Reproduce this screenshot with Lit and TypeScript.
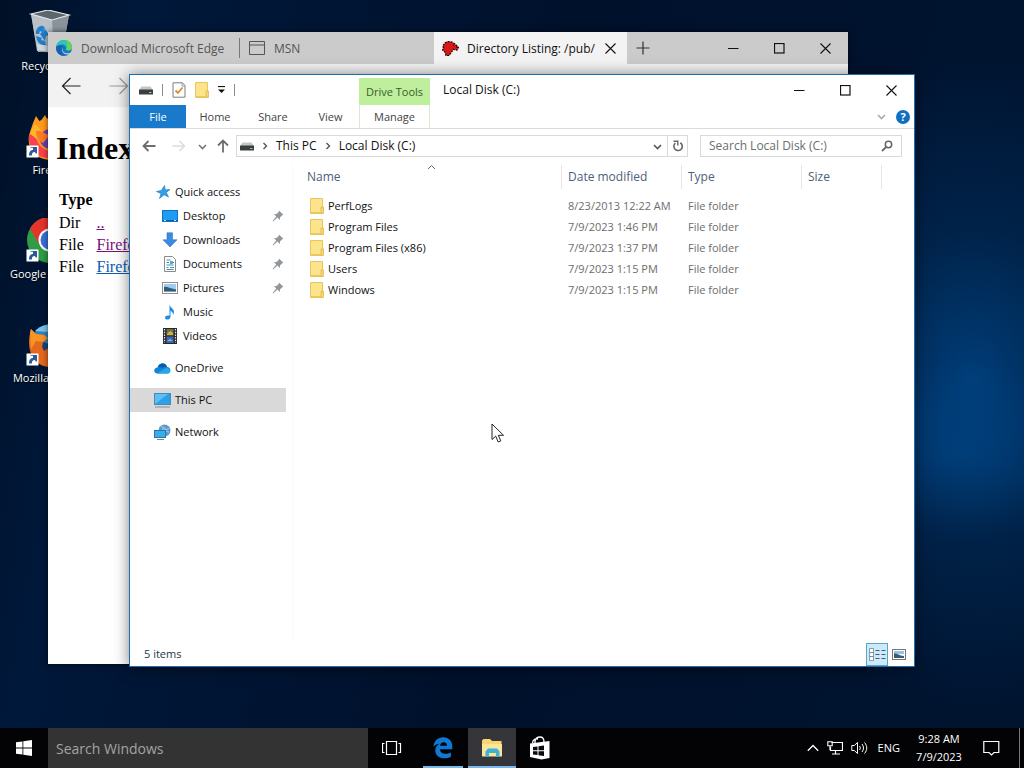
import { LitElement, html, css, svg, nothing } from "lit";
import { customElement } from "lit/decorators.js";

const box = (w: number, h: number, body: unknown) => html`
  <svg width=${w} height=${h} viewBox="0 0 ${w} ${h}" fill="none" aria-hidden="true">${body}</svg>`;

/* ---------- window glyphs ---------- */
const minimize = box(11, 11, svg`<path d="M0 5.5h10.500" stroke="#111"/>`);
const maximize = box(11, 11, svg`<rect x=".5" y=".5" width="9.500" height="9.500" stroke="#111" stroke-width="1.200"/>`);
const close = box(11, 11, svg`<path d="M.5.5l10 10M10.500.5l-10 10" stroke="#111" stroke-width="1.100"/>`);
const plus = box(14, 14, svg`<path d="M7 .5v13M.5 7h13" stroke="#333" stroke-width="1.200"/>`);
const chevronDown = (color: string) => box(9, 9, svg`<path d="M1 3l3.500 3.500L8 3" stroke=${color} stroke-width="1.600"/>`);
const chevronRight = box(6, 8, svg`<path d="M1.500 1l3 3-3 3" stroke="#555" stroke-width="1.400"/>`);

/* ---------- desktop icons ---------- */
const shortcut = svg`
  <rect x=".5" y="31.500" width="12" height="12" fill="#fff"/>
  <path d="M3 41.500c0-4 1.800-5.500 4-5.500v-2.200h-2.500V33H11v6.500h-1l-1.300-1.500C6.500 38 5.800 39.500 6 41.500z" fill="#2c5a9c"/>`;
const recycleBin = box(48, 48, svg`
  <path d="M5 4l18-4 20 5-6 34-25 3z" fill="#a9b1b8"/>
  <path d="M5 4l21 5 2 34-17-2z" fill="#b9c0c6"/>
  <path d="M26 9l17-4-6 33-9 4z" fill="#8b949c"/>
  <path d="M5 4l17-4 21 5-17 5z" fill="#5d656d" stroke="#e3e8ec" stroke-width="1.200"/>
  <path d="M10 24c-1-4 3-9 7-8l2 2-3 4-2-1-1 3zM19 19l4 6-3 1-1 5-5-7zM10 26l6 2-1 2 4 1 1 4c-6 1-9-3-10-9z" fill="#1f7fd0"/>
  <path d="M11 34l16 3v5l-15-2z" fill="#dde2e5" opacity=".7"/>`);
const firefoxNew = box(48, 48, svg`
  <circle cx="24" cy="24" r="20" fill="#ff8a1c"/>
  <path d="M7 9l3-7 4 6 5-7 4 8 10 2 9 13-3 14-14 8C8 45 1 34 3 21z" fill="#ff9a1f"/>
  <path d="M3 21C2 33 10 45 25 44l4-6C14 37 9 28 9 13z" fill="#f9414f"/>
  <path d="M4 20c1-5 3-6 5-10l7 7-5 8z" fill="#ffb52b"/>
  <circle cx="24" cy="25" r="10" fill="#6b3fb0"/>
  <path d="M10 17c6-1 9 4 14 4l-7 8c-4-2-7-6-7-12z" fill="#ff7b23"/>${shortcut}`);
const chrome = box(48, 48, svg`
  <circle cx="24" cy="22" r="23" fill="#2f9c46"/>
  <path d="M4 10.500A23 23 0 0 1 44 11H24L14 28z" fill="#e5352b"/>
  <path d="M44 11a23 23 0 0 1-20 34l10-17-8-17z" fill="#fbc116"/>
  <circle cx="24" cy="22" r="11.500" fill="#fff"/><circle cx="24" cy="22" r="9.500" fill="#3a72d8"/>${shortcut}`);
const firefoxOld = box(48, 48, svg`
  <circle cx="25" cy="22" r="20" fill="#2f83c4"/>
  <path d="M9 9C15 3 24 1 32 4l-9 6z" fill="#7cc3ea"/>
  <path d="M4 11l1-4 5 5 8 1 4 3-5 4 2 5 8 2 10 14-14 4C9 44 0 31 4 11z" fill="#e4691d"/>
  <path d="M4 11l1-4 5 5 8 1 4 3-5 4-7-1-5 8z" fill="#f79423"/>
  <path d="M17 20l6 2 1 3-6 4-2-4z" fill="#1d4375"/>${shortcut}`);

/* ---------- file explorer icons ---------- */
const drive = box(14, 10, svg`
  <path d="M2.500 1.500h9L14 5H0z" fill="#c3c5c7"/><rect y="4.500" width="14" height="5" rx=".6" fill="#3c3f42"/>
  <rect x="10" y="7" width="2.500" height="1" fill="#7fd28f"/>`);
const checkDoc = box(14, 16, svg`
  <path d="M1 .8h9.500L13 3.500v11.700H1z" fill="#fff" stroke="#7d7d7d"/><path d="M10 1v3h3" stroke="#9a9a9a"/>
  <path d="M3.500 8.500l2.500 2.500 4.500-5.500" stroke="#e08a2c" stroke-width="1.800"/>`);
const folder = box(14, 16, svg`
  <path d="M.5.500h12v15H.5z" fill="#fce48d" stroke="#e9c65c"/><path d="M1 14.500h12" stroke="#ecc95f"/>
  <path d="M11 9h2.500v6.500H11z" fill="#f6d774" stroke="#dfb74c" stroke-width=".8"/>`);
const star = box(16, 16, svg`
  <path d="M9.500 1.500l.8 4.400 4.700-.4-3.700 3 2.200 4.500-4.400-2.300-4.600 3.800 1.600-5-4.600-2 4.800-1z" fill="#31a0e6" stroke="#2481c0" stroke-width=".7"/>`);
const desktop = box(16, 16, svg`
  <rect x=".5" y="2.500" width="15" height="11" fill="#1d9bf5" stroke="#1673bb"/><path d="M1 12.500h14" stroke="#0a5c9f"/><path d="M2 12.500h2m8 0h2" stroke="#cfeaff"/>`);
const downloads = box(16, 16, svg`<path d="M5 .8h5.500v7H15L8 15 1 7.800h4z" fill="#3b8be0" stroke="#2d74c2" stroke-width=".6"/>`);
const documents = box(16, 16, svg`
  <path d="M2.500.5h8l3 3v12h-11z" fill="#fff" stroke="#8a8a8a"/>
  <path d="M4.500 4h4M4.500 6.500h2.500M9 6.500h3M4.500 9h7M4.500 11.500h2m1.500 0h4M4.500 13.500h7" stroke="#3f8fb0"/><rect x="8" y="5" width="3" height="3" fill="#5aa8c6"/>`);
const picture = box(16, 12, svg`
  <rect x=".5" y=".5" width="15" height="11" fill="#fff" stroke="#8e8e8e"/><rect x="2" y="2" width="12" height="8" fill="#9fcdf2"/>
  <path d="M2 5c3-1 5 1 8 1.500l4 1V10H2z" fill="#345c74"/><path d="M2 9h12v1H2z" fill="#7a9ab8"/>`);
const music = box(16, 16, svg`
  <path d="M7.500.5c.5 3 4.500 4 4.500 7.500 0 1.200-.4 2-1 3 .2-2.500-1.200-3.600-2.500-4V13c0 3-5.500 3.500-5.500.8C3 12 5.500 11 7.500 11.800z" fill="#1e8fe0"/>`);
const videos = box(14, 16, svg`
  <rect width="14" height="16" fill="#26282c"/><path d="M1.500 1v14M12.500 1v14" stroke="#e5e5e5" stroke-width="1.200" stroke-dasharray="1.500 1.200"/>
  <rect x="3.500" y="1" width="7" height="6.500" fill="#6d7440"/><path d="M4 6l3-3 3 2v2H4z" fill="#d1b23f"/><rect x="3.500" y="8.500" width="7" height="6.500" fill="#3e66ad"/><path d="M4 13l3-2 3 2z" fill="#8db4e6"/>`);
const oneDrive = box(17, 12, svg`
  <path d="M3 11.500C-1 11-.5 5.500 3.500 5.500 5 0 12 0 13 5c4 0 5 6 .5 6.500z" fill="#1283d6"/>
  <path d="M4 5c2-5 8-4.500 9 0-2-.5-3 0-4 .8z" fill="#0a5cac"/><path d="M3 11.500l8-5c5-2 7 4.500 2.500 5z" fill="#29a5ea"/>`);
const computer = box(17, 16, svg`
  <rect x=".5" y="1.500" width="16" height="11" fill="#5cc0f4" stroke="#4789b0"/><path d="M1 12L14 2h2v10z" fill="#2ea1e6"/><path d="M1 15h15" stroke="#7f8f9c"/>`);
const network = box(17, 16, svg`
  <circle cx="10.500" cy="6.500" r="6" fill="#5b9bcc"/><path d="M7 2c2 2 4 1 5 4l3-2M8 5c3-1 4 3 7 3" stroke="#a9cfe8"/>
  <rect x=".5" y="6.500" width="11" height="7" fill="#37aeea" stroke="#2876a5"/><path d="M3 15.500h7" stroke="#6e8799"/>`);
const pin = box(12, 12, svg`<path d="M7 .5L11.500 5l-1.300.3L8 7.500V10L5.500 7.600 1 11.500l-.5-.5L4.300 6.500 2 4h2.600L6.800 1.800z" fill="#8f979d"/>`);
const magnifier = box(12, 12, svg`<circle cx="7.500" cy="4.500" r="3.200" stroke="#666" stroke-width="1.500"/><path d="M5.200 6.800L1 11" stroke="#666" stroke-width="1.800"/>`);
const refresh = box(12, 12, svg`<path d="M8.300 2.800A4.200 4.200 0 1 1 3.300 3.200" stroke="#666" stroke-width="1.600"/><path d="M1.500 1.200h4.300v4.300" stroke="#666" stroke-width="1.400"/>`);
const arrow = (color: string) => box(14, 12, svg`<path d="M13.500 6H1.500M6.500 1l-5 5 5 5" stroke=${color} stroke-width="1.800"/>`);
const arrowRight = (color: string) => box(14, 12, svg`<path d="M.5 6h12M7.500 1l5 5-5 5" stroke=${color} stroke-width="1.500"/>`);
const arrowUp = box(12, 14, svg`<path d="M6 13.500V1.500M1 6.500l5-5 5 5" stroke="#6d6d6d" stroke-width="1.800"/>`);
const detailsView = box(17, 13, svg`
  <path d="M.5.5h4v4h-4zM.5 4.500h4v4h-4zM.5 8.500h4v4h-4z" fill="#fff" stroke="#6e8796" stroke-width=".8"/>
  <path d="M6.500 2.500h4m2 0h4M6.500 6.500h4m2 0h4M6.500 10.500h4m2 0h4" stroke="#44606f"/>`);
const largeView = box(14, 11, svg`
  <rect x=".5" y=".5" width="13" height="10" fill="#fff" stroke="#777"/><path d="M2 2h10v3H2z" fill="#8fc4ee"/><path d="M2 4.500c4 0 5 2 10 2.500v2H2z" fill="#3b5d70"/>`);

/* ---------- browser icons ---------- */
const edgeSwirl = box(16, 16, svg`
  <circle cx="8" cy="8" r="8" fill="#1378c8"/>
  <path d="M.3 7C1 2.500 4 0 8 0c5 0 8 4 8 7.500 0 3-4.500 3.700-6 2C11 7 9 4.500 6 4.500 3.500 4.500 1.200 5.500.3 7z" fill="#2ec5b6"/>
  <path d="M9 .1c4.500.5 7 4 7 7.400 0 3-4.500 3.700-6 2 1.500-3.500 2-6-1-9.400z" fill="#62d65a"/>
  <path d="M6.500 7.500c-1 5 4 7 8 5.200l-1 1.600c-4 1-9-2-7-6.800z" fill="#d8d8d8"/><path d="M.2 7C2 5 5 5 7 6.500 4 8 4.500 13 9 16 3 16-.6 12 .2 7z" fill="#1a5fb4"/>`);
const pageGlyph = box(16, 14, svg`<path d="M.5.5h15v13H.5zM.5 4h15" stroke="#555"/>`);
const mozHead = box(17, 15, svg`
  <path d="M3 2l3-1.500 4 .5 3 2 3.500 3.500L15 9l-4-.5-1 2-3 4H4L3 11 .5 9l1-2-.7-2z" fill="#d51a17" stroke="#200404" stroke-width="1.200" stroke-dasharray="2 1"/>
  <path d="M11 4.500h1M14 6h2" stroke="#300"/>`);
const thinBack = box(20, 18, svg`<path d="M19.500 9H1.500M9.500 1l-8 8 8 8" stroke="#222" stroke-width="1.200"/>`);
const thinForward = box(20, 18, svg`<path d="M.5 9h18M10.500 1l8 8-8 8" stroke="#999" stroke-width="1.200"/>`);

/* ---------- taskbar icons ---------- */
const startLogo = box(16, 16, svg`<path d="M0 2.300L6.500 1.400V7.500H0zM7.300 1.300L16 0v7.500H7.300zM0 8.400h6.500v6.200L0 13.700zM7.300 8.400H16V16l-8.700-1.300z" fill="#fff"/>`);
const taskView = box(20, 14, svg`<path d="M4.500.5h10v13h-10zM2.500 2.500h-2v9h2M16.500 2.500h2v9h-2" stroke="#fff" stroke-width="1.200"/>`);
const edgeE = box(20, 22, svg`
  <path d="M.3 9.800C1 4 4.800.3 10.300.3c6 0 9 4.300 9 9.400v2.500H6.900c.2 4.400 6 6 11 3.200v4.300C11 23.300 2.300 21 2.300 13.600c0-3.200 1.700-5.500 4-6.800C3.600 7 1.500 8.200.3 9.800zM7 8.700h7c0-4.400-6.300-4.600-7 0z" fill="#0f78d4"/>`);
const explorerIcon = box(22, 20, svg`
  <path d="M1 2.500L2.500 1H9l2 2h9.500v15H1z" fill="#f7d672"/><path d="M1 6h20v12.500H1z" fill="#fbe59b"/>
  <path d="M4.500 19v-5.500L7 10.500h9l2.500 3V19H15v-4H8v4z" fill="#3fb0d6"/>`);
const store = box(22, 24, svg`
  <path d="M6 7C5.500 2 9 1 11 1s4 1.500 4 5M3.500 7C4 3 6.500 2.500 9 3" stroke="#fff" stroke-width="1.300"/>
  <path d="M1 7.500L20.500 5v17l-8 1.500L1 21z" fill="#fff"/>
  <path d="M4 11l4.500-.6v3.800H4zM9.500 10.200l5.500-.8v4.800H9.500zM4 15.200h4.500v3.900L4 18.500zM9.500 15.200H15v4.800l-5.500-.8z" fill="#0b0b0e"/>`);
const trayUp = box(12, 8, svg`<path d="M.8 6.700L6 1.500l5.200 5.200" stroke="#fff" stroke-width="1.300"/>`);
const trayNet = box(16, 14, svg`<path d="M4.500 1.500h11v8H3.500V6M8.500 9.500v3M5 13h8" stroke="#fff" stroke-width="1.200"/><path d="M.8.800h4.400v4H.8zM3 5v4" stroke="#fff" stroke-width="1.100"/>`);
const traySound = box(17, 14, svg`<path d="M.8 4.500h2.500L6.500 1.500v11L3.300 9.500H.8zM8.500 5c1 1.200 1 2.800 0 4M11 3c2 2.500 2 5.500 0 8M13.500 1.500c3 3.500 3 7.500 0 11" stroke="#fff"/>`);
const action = box(17, 17, svg`<path d="M.8 1.500h15v11H11L8.500 15 6 12.500H.8z" stroke="#fff" stroke-width="1.200"/>`);
const pointer = box(14, 21, svg`<path d="M1 1v15.500l3.700-3.400 2.500 5.900 2.600-1.100-2.500-5.600H12.500z" fill="#fff" stroke="#222"/>`);

const reset = css`
  * { box-sizing: border-box; }
  svg { display: block; flex: none; }
  button, input { font: inherit; color: inherit; background: none; border: 0; padding: 0; margin: 0; border-radius: 0; outline: 0; }
  button { display: flex; align-items: center; justify-content: center; }
`;

@customElement("desktop-icons")
export class DesktopIcons extends LitElement {
  static styles = [reset, css`
    :host { display: flex; flex-direction: column; width: 100px; color: #fff; font-size: 11px; line-height: 16px; }
    .item { height: 104px; padding-top: 10px; display: flex; flex-direction: column; align-items: center; justify-content: flex-start; width: 100px; white-space: nowrap; text-shadow: 0 1px 2px #000; }
  `];
  items = [
    { label: "Recycle Bin", icon: recycleBin },
    { label: "Firefox", icon: firefoxNew },
    { label: "Google Chrome", icon: chrome },
    { label: "Mozilla Firefox", icon: firefoxOld },
  ];
  render() {
    return this.items.map((i) => html`<button class="item">${i.icon}<span>${i.label}</span></button>`);
  }
}

@customElement("edge-window")
export class EdgeWindow extends LitElement {
  static styles = [reset, css`
    :host { display: flex; flex-direction: column; background: #fff; font-size: 12px; box-shadow: 0 0 6px rgba(0, 0, 0, .6); overflow: hidden; }
    .tabs { height: 32px; display: flex; background: #cbcbcb; color: #555; flex: none; }
    .tab { display: flex; justify-content: flex-start; gap: 9px; padding-left: 8px; white-space: nowrap; }
    .first { width: 192px; }
    .first::after { content: ""; align-self: center; height: 20px; border-right: 1px solid #777; margin-left: auto; }
    .second { width: 194px; padding-left: 9px; }
    .active { width: 193px; gap: 8px; background: #f3f3f3; color: #111; align-items: center; padding-right: 11px; }
    .title { overflow: hidden; flex: 1; text-align: left; }
    .new { width: 32px; }
    .controls { display: flex; margin-left: auto; }
    .controls button { width: 46px; }
    .bar { height: 43px; background: #f2f2f2; display: flex; align-items: center; gap: 28px; padding-left: 13px; flex: none; }
    .page { font: 16px/20px "Liberation Serif", serif; color: #000; padding: 22px 8px; }
    h1 { font-size: 32px; line-height: 38px; margin: 0 0 21px; }
    table { border-spacing: 0; margin-left: 3px; }
    td, th { padding: 0 6px 0 0; height: 22px; text-align: left; }
    th { height: 24px; padding-right: 4px; }
    a { color: #0b5cb5; }
    a.seen { color: #7a1080; }
  `];
  render() {
    return html`
      <div class="tabs">
        <button class="tab first">${edgeSwirl}Download Microsoft Edge</button>
        <button class="tab second">${pageGlyph}MSN</button>
        <div class="tab active">${mozHead}<span class="title">Directory Listing: /pub/</span><button aria-label="Close tab">${close}</button></div>
        <button class="new" aria-label="New tab">${plus}</button>
        <div class="controls">
          <button aria-label="Minimize">${minimize}</button><button aria-label="Maximize">${maximize}</button><button aria-label="Close">${close}</button>
        </div>
      </div>
      <div class="bar"><button aria-label="Back">${thinBack}</button><button aria-label="Forward">${thinForward}</button></div>
      <div class="page">
        <h1>Index</h1>
        <table>
          <tr><th>Type</th><th></th></tr>
          <tr><td>Dir</td><td><a class="seen" href="#">..</a></td></tr>
          <tr><td>File</td><td><a class="seen" href="#">Firefox</a></td></tr>
          <tr><td>File</td><td><a href="#">Firefox</a></td></tr>
        </table>
      </div>`;
  }
}

@customElement("explorer-window")
export class ExplorerWindow extends LitElement {
  static styles = [reset, css`
    :host { display: flex; flex-direction: column; background: #fff; border: 1px solid #1b6fae; font-size: 12px; line-height: 16px; color: #111; box-shadow: 0 1px 14px rgba(0, 0, 0, .5); overflow: hidden; }
    .head { display: grid; grid-template: 30px 23px / 229px 71px 1fr; border-bottom: 1px solid #dadbdc; flex: none; }
    .quick { display: flex; align-items: center; gap: 9px; padding-left: 9px; }
    .rule { width: 1px; height: 12px; background: #8a8a8a; }
    .tools { background: #bfee9c; margin-top: 3px; display: flex; align-items: center; justify-content: center; color: #36602a; white-space: nowrap; font-size: 11px; }
    .titlebar { display: flex; align-items: center; padding-left: 13px; }
    .controls { display: flex; margin-left: auto; align-self: stretch; }
    .controls button { width: 46px; }
    .tabs { display: flex; color: #444; font-size: 11px; }
    .tabs button { width: 58px; }
    .tabs .file { width: 56px; background: #1979ca; color: #fff; }
    .tabs .view { width: 57px; }
    .manage { color: #444; border: solid #dbe8d2; border-width: 0 1px; font-size: 11px; }
    .help { display: flex; align-items: center; justify-content: flex-end; gap: 10px; padding-right: 4px; }
    .mark { width: 14px; height: 14px; border-radius: 50%; background: #0f6fc0; color: #fff; font-size: 11px; line-height: 14px; font-weight: 700; }
    .address { display: flex; align-items: center; padding: 6px 12px 5px 12px; flex: none; }
    .back { width: 14px; } .forward { width: 14px; margin-left: 16px; } .recent { width: 9px; margin-left: 12px; } .up { width: 12px; margin: 0 7px 0 10px; }
    .crumbs { flex: 1; height: 22px; border: 1px solid #d9d9d9; display: flex; align-items: center; padding-left: 3px; gap: 8px; }
    .crumbs button { white-space: nowrap; }
    .drop { margin-left: auto; }
    .reload { width: 20px; align-self: stretch; border-left: 1px solid #d9d9d9; margin-left: -3px; }
    .search { width: 202px; height: 22px; border: 1px solid #d9d9d9; margin-left: 12px; display: flex; align-items: center; padding: 0 8px; }
    .search input { flex: 1; min-width: 0; }
    ::placeholder { color: #6d6d6d; opacity: 1; }
    .main { flex: 1; display: flex; min-height: 0; }
    nav { width: 163px; padding-top: 18px; border-right: 1px solid #fafafa; flex: none; font-size: 11px; }
    nav button { width: 156px; height: 24px; justify-content: flex-start; gap: 4px; padding: 0 2px 0 24px; }
    nav .sub { padding-left: 32px; gap: 5px; }
    nav .ico { width: 17px; display: flex; justify-content: center; }
    nav .sub .ico { width: 16px; }
    nav .pin { margin-left: auto; }
    nav .top { margin-top: 8px; }
    nav .on { background: #d9d9d9; }
    .files { flex: 1; padding: 3px 32px 0 8px; }
    table { table-layout: fixed; border-spacing: 0; width: 100%; max-width: 581px; }
    .c1 { width: auto; } .c2, .c3 { width: 120px; } .c4 { width: 80px; }
    th { font-weight: 400; text-align: left; height: 24px; padding: 0 6px; border-right: 1px solid #e5e5e5; color: #4c607a; position: relative; }
    .sort { position: absolute; left: 126px; top: -1px; }
    td { height: 21px; padding: 0 0 0 6px; color: #6d6d6d; white-space: nowrap; font-size: 11px; }
    tbody::before { content: ""; display: block; height: 6px; }
    .name { display: flex; align-items: center; gap: 4px; color: #111; padding-left: 3px; }
    .status { display: flex; height: 24px; align-items: center; padding: 0 4px 0 14px; flex: none; color: #24364a; font-size: 11px; }
    .status .details { margin-left: auto; width: 22px; height: 23px; border: 1px solid #57a5cf; background: #cdeafa; }
    .status .large { width: 22px; height: 22px; }
  `];
  places = [
    { label: "Quick access", icon: star },
    { label: "Desktop", icon: desktop, sub: true, pinned: true },
    { label: "Downloads", icon: downloads, sub: true, pinned: true },
    { label: "Documents", icon: documents, sub: true, pinned: true },
    { label: "Pictures", icon: picture, sub: true, pinned: true },
    { label: "Music", icon: music, sub: true },
    { label: "Videos", icon: videos, sub: true },
    { label: "OneDrive", icon: oneDrive, cls: "top" },
    { label: "This PC", icon: computer, cls: "top on" },
    { label: "Network", icon: network, cls: "top" },
  ];
  files = [
    ["PerfLogs", "8/23/2013 12:22 AM"],
    ["Program Files", "7/9/2023 1:46 PM"],
    ["Program Files (x86)", "7/9/2023 1:37 PM"],
    ["Users", "7/9/2023 1:15 PM"],
    ["Windows", "7/9/2023 1:15 PM"],
  ];
  render() {
    return html`
      <div class="head">
        <div class="quick">
          ${drive}<span class="rule"></span>
          <button aria-label="Properties">${checkDoc}</button><button aria-label="New folder">${folder}</button>
          <button aria-label="Customize toolbar">${box(7, 8, svg`<path d="M0 .5h7" stroke="#111" stroke-width="1.200"/><path d="M0 3.500h7L3.500 7z" fill="#111"/>`)}</button>
          <span class="rule"></span>
        </div>
        <div class="tools">Drive Tools</div>
        <div class="titlebar">Local Disk (C:)
          <div class="controls">
            <button aria-label="Minimize">${minimize}</button><button aria-label="Maximize">${maximize}</button><button aria-label="Close">${close}</button>
          </div>
        </div>
        <div class="tabs"><button class="file">File</button><button>Home</button><button>Share</button><button class="view">View</button></div>
        <button class="manage">Manage</button>
        <div class="help"><button aria-label="Expand ribbon">${chevronDown("#aaa")}</button><button class="mark" aria-label="Help">?</button></div>
      </div>
      <div class="address">
        <button class="back" aria-label="Back">${arrow("#6d6d6d")}</button>
        <button class="forward" aria-label="Forward">${arrowRight("#dcdcdc")}</button>
        <button class="recent" aria-label="Recent locations">${chevronDown("#777")}</button>
        <button class="up" aria-label="Up">${arrowUp}</button>
        <div class="crumbs">${drive}${chevronRight}<button>This PC</button>${chevronRight}<button>Local Disk (C:)</button>
          <button class="drop" aria-label="Previous locations">${chevronDown("#555")}</button>
          <button class="reload" aria-label="Refresh">${refresh}</button>
        </div>
        <label class="search"><input aria-label="Search Local Disk (C:)" placeholder="Search Local Disk (C:)" />${magnifier}</label>
      </div>
      <div class="main">
        <nav>${this.places.map((p) => html`
          <button class="${p.sub ? "sub" : ""} ${p.cls ?? ""}"><span class="ico">${p.icon}</span>${p.label}${p.pinned ? html`<span class="pin">${pin}</span>` : nothing}</button>`)}
        </nav>
        <div class="files">
          <table>
            <colgroup><col class="c1" /><col class="c2" /><col class="c3" /><col class="c4" /></colgroup>
            <thead><tr><th>Name<span class="sort">${box(9, 6, svg`<path d="M1 5l3.500-3.500L8 5" stroke="#666"/>`)}</span></th><th>Date modified</th><th>Type</th><th>Size</th></tr></thead>
            <tbody>${this.files.map(([n, d]) => html`<tr><td><span class="name">${folder}${n}</span></td><td>${d}</td><td>File folder</td><td></td></tr>`)}</tbody>
          </table>
        </div>
      </div>
      <div class="status">5 items
        <button class="details" aria-label="Details view">${detailsView}</button><button class="large" aria-label="Large icons view">${largeView}</button>
      </div>`;
  }
}

@customElement("task-bar")
export class TaskBar extends LitElement {
  static styles = [reset, css`
    :host { display: flex; height: 40px; background: #030305; color: #fff; flex: none; font-size: 11px; }
    button { width: 48px; border-bottom: 2px solid transparent; padding-top: 2px; }
    input { flex: 0 1 320px; min-width: 0; background: #333; padding: 0 8px; font-size: 14px; }
    ::placeholder { color: #a3a3a3; opacity: 1; }
    .edge { width: 40px; margin: 0 5px 0 7px; border-color: #76b9ed; }
    .open { background: #35353a; border-color: #76b9ed; }
    .tray { margin-left: auto; display: flex; }
    .tray button { width: auto; }
    .small { padding: 2px 4px 0; }
    .tray .lang { padding: 0 9px 0 6px; }
    .tray .clock { flex-direction: column; width: 60px; line-height: 18px; padding: 2px 0 0; }
    .tray .action { width: 44px; }
    .tray .show { width: 11px; padding: 0; border: 0; justify-content: flex-end; }
    .line { width: 1px; height: 40px; background: #77777a; margin-right: 4px; }
  `];
  render() {
    return html`
      <button aria-label="Start">${startLogo}</button>
      <input aria-label="Search Windows" placeholder="Search Windows" />
      <button aria-label="Task View">${taskView}</button>
      <button class="edge" aria-label="Microsoft Edge">${edgeE}</button>
      <button class="open" aria-label="File Explorer">${explorerIcon}</button>
      <button aria-label="Store">${store}</button>
      <div class="tray">
        <button class="small" aria-label="Show hidden icons">${trayUp}</button>
        <button class="small" aria-label="Network">${trayNet}</button>
        <button class="small" aria-label="Volume">${traySound}</button>
        <button class="lang">ENG</button>
        <button class="clock"><span>9:28 AM</span><span>7/9/2023</span></button>
        <button class="action" aria-label="Notifications">${action}</button>
        <button class="show" aria-label="Show desktop"><span class="line"></span></button>
      </div>`;
  }
}

@customElement("app-root")
export class AppRoot extends LitElement {
  static styles = css`
    :host { display: flex; flex-direction: column; height: 100vh; overflow: hidden; font-family: "Open Sans", "Noto Sans", sans-serif; }
    .desk {
      flex: 1; min-height: 0; position: relative;
      background:
        radial-gradient(ellipse 130px 90px at 94% 62%, rgba(0, 90, 170, .35), transparent),
        radial-gradient(ellipse 260px 330px at 95% 52%, #003d78, rgba(0, 50, 100, .5) 45%, transparent),
        linear-gradient(100deg, #001026, #00183a 12%, #00112c 50%, #001430);
    }
    edge-window { position: absolute; left: 48px; top: 32px; right: 176px; bottom: 64px; }
    explorer-window { position: absolute; left: 129px; top: 74px; right: 109px; bottom: 61px; }
    .pointer { position: absolute; left: 491px; top: 423px; }
  `;
  render() {
    return html`
      <div class="desk">
        <desktop-icons></desktop-icons>
        <edge-window></edge-window>
        <explorer-window></explorer-window>
        <div class="pointer">${pointer}</div>
      </div>
      <task-bar></task-bar>`;
  }
}
